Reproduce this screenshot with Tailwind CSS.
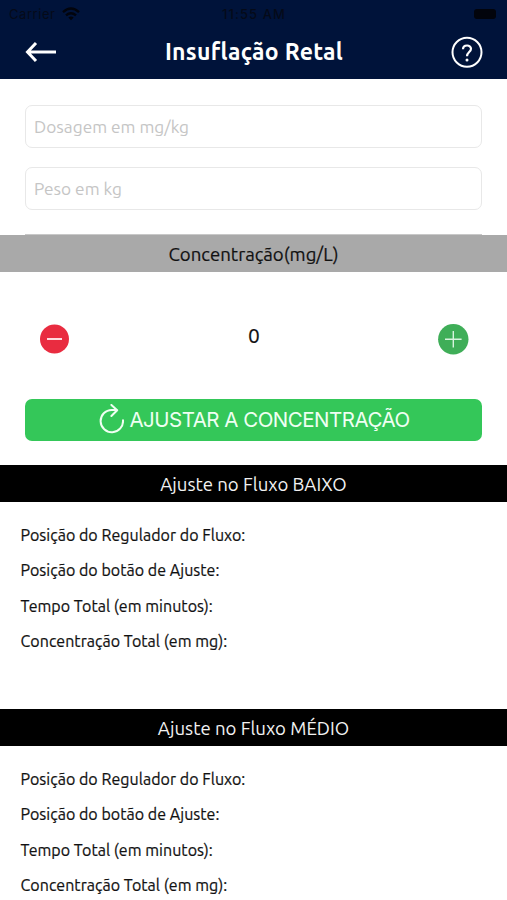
<!DOCTYPE html>
<html lang="pt-BR">
<head>
<meta charset="utf-8">
<title>Insuflação Retal</title>
<script src="https://cdn.jsdelivr.net/npm/@tailwindcss/browser@4"></script>
</head>
<body class="h-[900px] w-[507px] overflow-hidden bg-white font-[Ubuntu,'Noto_Sans',sans-serif] text-[#111]">
<header class="h-[79px] bg-[#00133a]">
  <div class="grid h-7 grid-cols-3 items-center px-[9px] pt-px font-[Inter,sans-serif] text-[13px] text-[#050a18]">
    <div class="flex items-center gap-[7px]"><span class="tracking-[0.55px]">Carrier</span>
      <svg class="-mt-[2px] h-[14px] w-[18px]" viewBox="0 0 18 14" fill="none" stroke="#02040c" stroke-width="2.4"><path d="M1 5.2Q9-2 17 5.2M4 8.3Q9 4 14 8.3"/><path d="M6.3 10.5Q9 8.3 11.7 10.5L9 13.2Z" fill="#02040c" stroke="none"/></svg>
    </div>
    <span class="-mr-px text-center font-medium tracking-[1.1px] whitespace-nowrap">11:55 AM</span>
    <span class="mr-[2px] -mt-px h-[10px] w-[22px] justify-self-end rounded-[3px] bg-[#02040c]"></span>
  </div>
  <div class="flex h-12 items-center justify-between pr-[24px] pl-[25px] text-white">
    <svg class="h-[22px] w-[32px]" viewBox="0 0 32 22" fill="none" stroke="currentColor" stroke-width="3"><path d="M11 2L2.5 11L11 20M2.5 11H31"/></svg>
    <h1 class="text-[23px] leading-8 font-bold tracking-[0.3px] whitespace-nowrap">Insuflação Retal</h1>
    <svg class="h-8 w-8" viewBox="0 0 32 32" fill="none" stroke="currentColor"><circle cx="16" cy="16.3" r="14.5" stroke-width="2"/><path d="M12 13.3C12 8.3 20 8.3 20 12.8C20 16 16 16.2 16 20.2" stroke-width="2.2"/><circle cx="16" cy="23.9" r="1.5" fill="currentColor" stroke="none"/></svg>
  </div>
</header>
<main>
  <div class="flex flex-col gap-5 px-[25px] pt-[26px]">
    <input class="h-[43px] w-full rounded-[7px] border border-[#e8e8e8] px-2 text-[17.3px] placeholder:text-[#c5c5c5]" placeholder="Dosagem em mg/kg">
    <input class="-mt-px h-[43px] w-full rounded-[7px] border border-[#e8e8e8] px-2 text-[17.3px] placeholder:text-[#c5c5c5]" placeholder="Peso em kg">
  </div>
  <div class="mx-[25px] mt-6 h-px bg-[#c8c8c8]"></div>
  <h2 class="flex h-[37px] items-center justify-center bg-[#a9a9a9] pt-[3px] text-[18.6px] [-webkit-text-stroke:0.2px]"><span>Concentração(mg/L)</span></h2>
  <div class="flex h-[127px] items-center justify-between pt-[7px] pr-[38px] pl-[39px]">
    <svg class="h-[31px] w-[31px]" viewBox="0 0 31 31"><circle cx="15.5" cy="15" r="14.5" fill="#e92c40"/><path d="M8 15H23" stroke="#ffdce0" stroke-width="2"/></svg>
    <span class="-mt-[6px] text-[21px] [-webkit-text-stroke:0.2px]">0</span>
    <svg class="h-[31px] w-[31px]" viewBox="0 0 31 31"><circle cx="15.3" cy="15.2" r="15.2" fill="#3fae58"/><path d="M7 15.2H23.6M15.3 6.9V23.5" stroke="#d8f3de" stroke-width="1.4"/></svg>
  </div>
  <button class="mx-[25px] flex h-[42px] w-[457px] items-center justify-center gap-[5px] rounded-[7px] bg-[#34c759] pt-px pl-[2px] font-[Inter,sans-serif] text-[20.5px] tracking-[-0.5px] text-[#effff2]">
    <svg class="-mt-[3px] h-[30px] w-[25px]" viewBox="0 0 25 30" fill="none" stroke="currentColor" stroke-width="2" stroke-linecap="round" stroke-linejoin="round"><path d="M24 16.2A11.2 11.2 0 1 1 12.8 5.9H18M12.4 0.9L18.2 6.2L12.4 12"/></svg>
    <span class="whitespace-nowrap">AJUSTAR A CONCENTRAÇÃO</span>
  </button>
  <section class="mt-[24px] h-[244px]">
    <h2 class="flex h-[37px] items-center justify-center bg-black pt-[3px] text-[18.6px] text-[#f2f2f2]"><span>Ajuste no Fluxo BAIXO</span></h2>
    <div class="pt-[15.6px] pl-[20.5px] text-[16px] leading-[35.5px] tracking-[0.03px] [-webkit-text-stroke:0.2px]">
      <p><span>Posição do Regulador do Fluxo:</span></p><p><span>Posição do botão de Ajuste:</span></p><p><span>Tempo Total (em minutos):</span></p><p><span>Concentração Total (em mg):</span></p>
    </div>
  </section>
  <section>
    <h2 class="flex h-[37px] items-center justify-center bg-black pt-[3px] text-[18.6px] text-[#f2f2f2]"><span>Ajuste no Fluxo MÉDIO</span></h2>
    <div class="pt-[15.6px] pl-[20.5px] text-[16px] leading-[35.5px] tracking-[0.03px] [-webkit-text-stroke:0.2px]">
      <p><span>Posição do Regulador do Fluxo:</span></p><p><span>Posição do botão de Ajuste:</span></p><p><span>Tempo Total (em minutos):</span></p><p><span>Concentração Total (em mg):</span></p>
    </div>
  </section>
</main>
</body>
</html>
